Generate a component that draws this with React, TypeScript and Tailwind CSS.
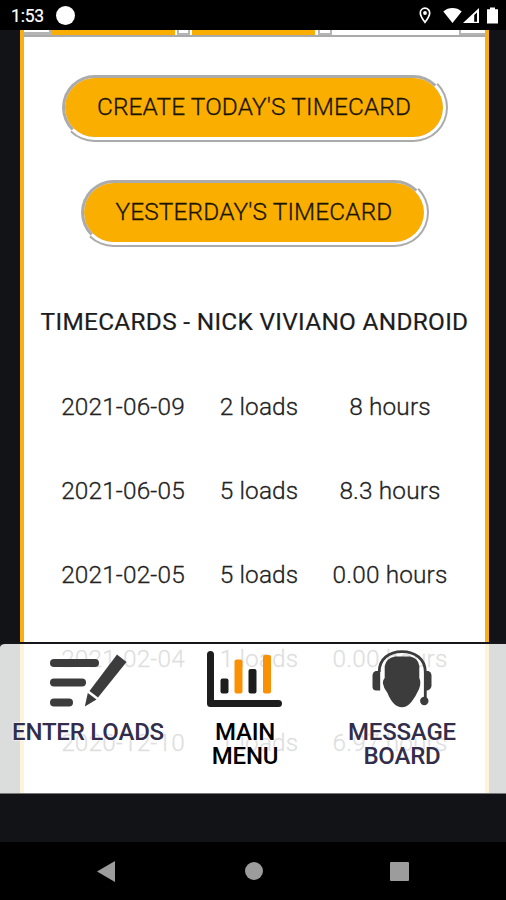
import React from "react";

interface Timecard {
  date: string;
  loads: string;
  hours: string;
}

const timecards: Timecard[] = [
  { date: "2021-06-09", loads: "2 loads", hours: "8 hours" },
  { date: "2021-06-05", loads: "5 loads", hours: "8.3 hours" },
  { date: "2021-02-05", loads: "5 loads", hours: "0.00 hours" },
  { date: "2021-02-04", loads: "1 loads", hours: "0.00 hours" },
  { date: "2020-12-10", loads: "1 loads", hours: "6.97 hours" },
];

function StatusBar() {
  return (
    <header className="flex h-[30px] shrink-0 items-center bg-black pl-[11px] pr-[8px] pt-[1px] text-white">
      <span className="w-[45px] text-[17.5px] leading-[30px] tracking-[-0.2px] [-webkit-text-stroke:0.2px_#fff]">1:53</span>
      <span className="size-[19px] rounded-full bg-white" />
      <svg className="ml-auto" width="12" height="17" viewBox="0 0 12 17" fill="none">
        <path d="M6 1.2C3.300 1.200 1.300 3.200 1.300 5.900C1.300 9 6 15.300 6 15.300S10.700 9 10.700 5.900C10.700 3.200 8.700 1.200 6 1.200Z" stroke="#fff" strokeWidth="1.700" />
        <circle cx="6" cy="6" r="1.900" fill="#fff" />
      </svg>
      <svg className="ml-[12px]" width="19" height="17" viewBox="0 0 19 17">
        <path d="M.3 4.400C5.500-.1 13.500-.1 18.700 4.400L9.500 16Z" fill="#fff" />
      </svg>
      <svg className="ml-[1px]" width="16" height="17" viewBox="0 0 16 17">
        <path d="M0 16L16 1V16ZM11.200 8V14.700H14V5.500Z" fill="#fff" fillRule="evenodd" />
      </svg>
      <svg className="ml-[8px]" width="11" height="17" viewBox="0 0 11 17">
        <path d="M3 .5H8V2.300H11V16.500H0V2.300H3Z" fill="#fff" />
      </svg>
    </header>
  );
}

// Lower edge of the button row that is scrolled under the status bar
function ScrolledRow() {
  return (
    <div className="flex h-[7px] shrink-0 border-b-2 border-[#aaa]">
      <div className="w-[27px] border-b-[3px] border-r-2 border-[#b5b5b5] bg-white" />
      <div className="h-[5px] w-[124px] bg-[#f9ae00]" />
      <div className="ml-[2px] mr-[2px] w-[13px] border-x-2 border-b-2 border-[#b5b5b5] bg-white" />
      <div className="h-[5px] w-[123px] bg-[#f9ae00]" />
      <div className="ml-[3px] w-[14px] border-x-2 border-b-2 border-[#b5b5b5] bg-white" />
      <div className="flex-1" />
      <div className="w-[26px] border-b-2 border-l-2 border-[#b5b5b5]" />
    </div>
  );
}

function PillButton({ label, className }: { label: string; className: string }) {
  return (
    <button
      className={`h-[69px] shrink-0 whitespace-nowrap rounded-full border-[5px] border-white bg-[#f9ae00] text-[24.4px] font-light leading-none tracking-[0.15px] text-[#1a1400] [-webkit-text-stroke:0.3px_#1a1400] [border-style:ridge] ${className}`}
    >
      {label}
    </button>
  );
}

function EnterLoadsIcon() {
  return (
    <svg width="78" height="58" viewBox="0 0 78 58" fill="#3c3c3c">
      <rect x="1" y="9" width="49" height="8" rx="4" />
      <rect x="1" y="28.500" width="36" height="8" rx="4" />
      <rect x="1" y="48.500" width="23" height="8" rx="4" />
      <path d="M68 4.500L77.500 12L49 47.500L40.500 41Z" />
      <path d="M38.800 43L47.500 49.500L35.800 56.500Z" />
    </svg>
  );
}

function MainMenuIcon() {
  return (
    <svg width="78" height="58" viewBox="0 0 78 58">
      <path d="M4.500 4.500V53.500H72.500" fill="none" stroke="#1d1d1d" strokeWidth="7" strokeLinecap="round" strokeLinejoin="round" />
      <rect x="14.500" y="28.500" width="8" height="15" rx="2" fill="#1d1d1d" />
      <rect x="28.500" y="9.500" width="8" height="34" rx="2" fill="#fa9105" />
      <rect x="42.500" y="19" width="8" height="24.500" rx="2" fill="#1d1d1d" />
      <rect x="57" y="5" width="8" height="38.500" rx="2" fill="#fa9105" />
    </svg>
  );
}

function MessageBoardIcon() {
  return (
    <svg width="60" height="58" viewBox="0 0 60 58" fill="#3c3c3c">
      <path d="M7.200 22C7.200 9 17 1.600 30 1.600S53.300 9 53.300 22V48" fill="none" stroke="#3c3c3c" strokeWidth="2.800" />
      <path d="M3.500 21H8.200V40.500H3.500Q.600 40 .500 37V25Q.700 22 3.500 21Z" />
      <path d="M52.500 21H56.500Q59.300 22 59.500 25V36Q59 39 55.500 40.500H52.500Z" />
      <circle cx="52.300" cy="51" r="4.200" />
      <path d="M23 6.500H38Q46.500 8 47.300 16V28Q49 31 48.200 35Q47.500 39 45 43C41 51 36 57.300 30 57.300S19 52 15.500 43Q11.500 38 10.800 33Q10.700 30 12.700 28V16Q14 8 23 6.500Z" />
    </svg>
  );
}

function BottomMenu() {
  return (
    <nav className="absolute inset-x-0 top-[612px] flex h-[152px] rounded-tl-[5px] border-b border-t-2 border-b-[#777] border-t-[#16161a] bg-white/85 text-center text-[24px] font-medium leading-[24px] tracking-[-0.2px] text-[#312d4b] [text-shadow:0_0_2px_#fff,0_0_2px_#fff]">
      <a className="flex w-[176px] flex-col items-center gap-[12px] pt-[6px]">
        <EnterLoadsIcon />
        <span className="whitespace-nowrap">ENTER LOADS</span>
      </a>
      <a className="flex w-[138px] flex-col items-center gap-[12px] pt-[6px] text-black">
        <MainMenuIcon />
        <span>MAIN<br />MENU</span>
      </a>
      <a className="flex w-[176px] flex-col items-center gap-[12px] pt-[6px]">
        <MessageBoardIcon />
        <span>MESSAGE<br />BOARD</span>
      </a>
    </nav>
  );
}

function SystemNav() {
  return (
    <footer className="flex h-[58px] shrink-0 items-center bg-black pl-[97px]">
      <svg width="18" height="21" viewBox="0 0 18 21" fill="#9c9c9c">
        <path d="M18 0V21L0 10.500Z" />
      </svg>
      <span className="ml-[130px] size-[18px] rounded-full bg-[#9c9c9c]" />
      <span className="ml-[127px] size-[19px] rounded-[1px] bg-[#9c9c9c]" />
    </footer>
  );
}

export default function App() {
  return (
    <div className="flex h-[900px] w-[506px] flex-col overflow-hidden bg-[#121316] font-['Roboto',sans-serif]">
      <StatusBar />
      <main className="relative h-[812px] shrink-0">
        <div className="ml-[20px] flex h-[763px] w-[469px] flex-col overflow-hidden border-x-4 border-[#f9ae12] bg-white">
          <ScrolledRow />
          <PillButton label="CREATE TODAY'S TIMECARD" className="ml-[36px] mt-[36px] w-[388px]" />
          <PillButton label="YESTERDAY'S TIMECARD" className="ml-[55px] mt-[36px] w-[350px]" />
          <h2 className="mt-[63px] whitespace-nowrap text-center text-[24.4px] leading-[24px] tracking-[0.3px] text-[#1c1c1c] [-webkit-text-stroke:0.2px_#1c1c1c]">
            TIMECARDS - NICK VIVIANO ANDROID
          </h2>
          <div className="mt-[31px]">
            {timecards.map((card) => (
              <div key={card.date} className="flex h-[84px] items-center text-center text-[24.4px] font-light tracking-[0.15px] text-[#222] [-webkit-text-stroke:0.3px_#222]">
                <span className="ml-[27px] w-[144px]">{card.date}</span>
                <span className="ml-[14px] w-[100px]">{card.loads}</span>
                <span className="ml-[12px] w-[138px]">{card.hours}</span>
              </div>
            ))}
          </div>
        </div>
        <BottomMenu />
      </main>
      <SystemNav />
    </div>
  );
}
